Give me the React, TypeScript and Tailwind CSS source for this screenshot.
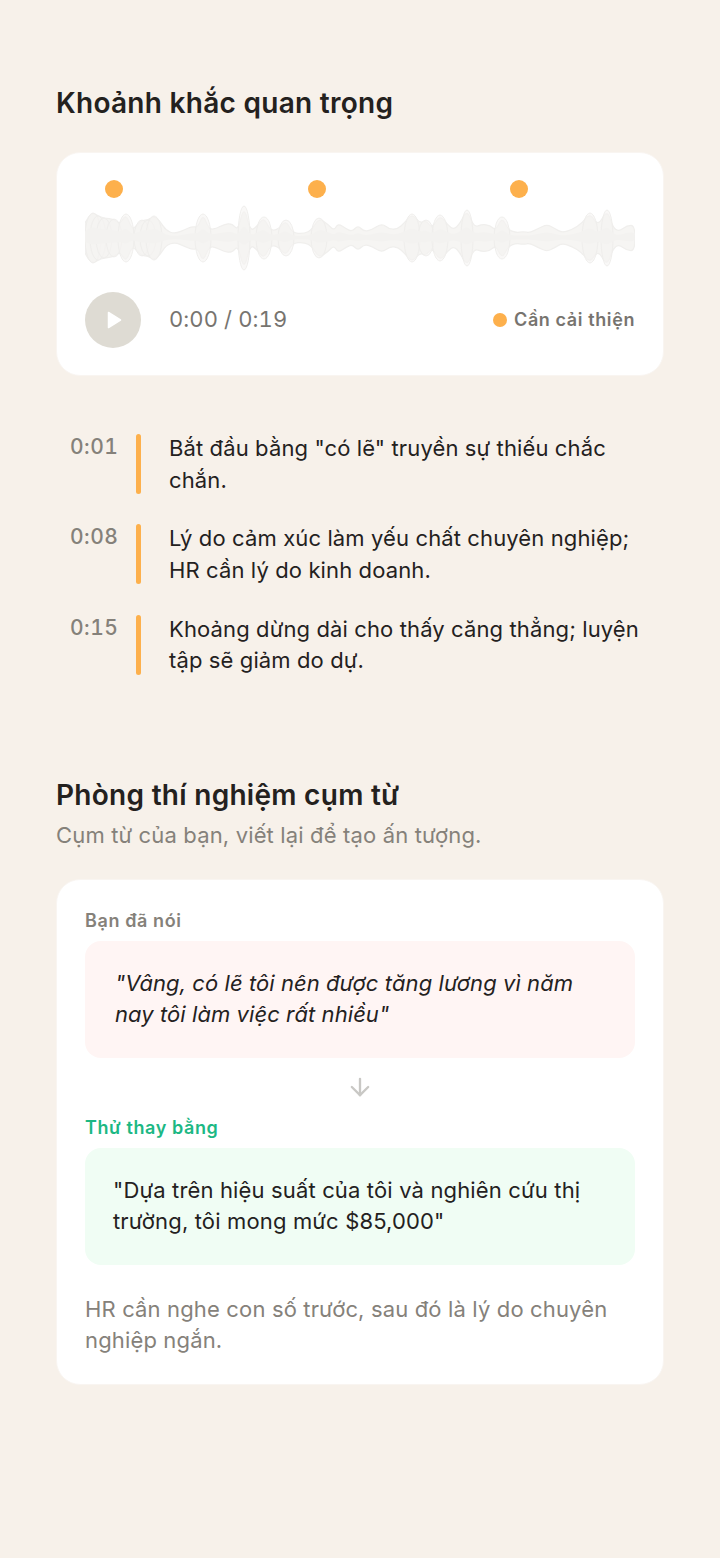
import { ArrowDown } from "lucide-react";

// [x, half height] of the waveform envelope, in picture coordinates
const PEAKS: [number, number][] = [
  [85, 14], [88, 20], [93, 24], [98, 21], [104, 19], [114, 18], [120, 13], [126, 23], [132, 8], [137, 12], [142, 17],
  [148, 17], [154, 21], [160, 16], [166, 7], [175, 4], [185, 8], [192, 11], [198, 10], [203, 23], [209, 8], [216, 9],
  [224, 13], [232, 14], [238, 7], [244, 31], [250, 7], [256, 10], [264, 20], [270, 7], [278, 8], [286, 17], [292, 5],
  [304, 4], [312, 8], [319, 19], [328, 13], [334, 7], [338, 14], [346, 9], [352, 6], [358, 12], [364, 6], [372, 8],
  [382, 14], [390, 8], [398, 9], [404, 14], [412, 23], [420, 14], [426, 17], [432, 9], [440, 22], [448, 12],
  [454, 8], [460, 14], [467, 27], [474, 10], [482, 13], [490, 12], [496, 7], [502, 20], [508, 8], [516, 5], [523, 6],
  [530, 5], [538, 9], [547, 13], [555, 9], [562, 5], [572, 8], [582, 14], [590, 24], [598, 11], [607, 27], [613, 10],
  [619, 6], [627, 12], [635, 12],
];

// Tall peaks show up as separate overlapping lobes in the waveform
const LOBES = PEAKS.filter(([x, h]) => h >= 17 && x > 92 && x < 630);

// Smooth outline through the midpoints of the envelope, mirrored around the centre line
const wavePath = (scale: number, skew: number) => {
  const upper = PEAKS.map(([x, h]): [number, number] => [x - 85, 39 - h * scale]);
  const lower = [...PEAKS].reverse().map(([x, h]): [number, number] => [x - 85, 39 + h * scale * skew]);
  const points = [...upper, ...lower];
  let d = `M${points[0][0]},${points[0][1]}`;
  for (let i = 1; i < points.length - 1; i++) {
    const [x, y] = points[i];
    const [nx, ny] = points[i + 1];
    d += ` Q${x},${y} ${(x + nx) / 2},${(y + ny) / 2}`;
  }
  return `${d} L${points[points.length - 1][0]},${points[points.length - 1][1]} Z`;
};

const MOMENTS = [
  { time: "0:01", text: 'Bắt đầu bằng "có lẽ" truyền sự thiếu chắc chắn.' },
  { time: "0:08", text: "Lý do cảm xúc làm yếu chất chuyên nghiệp; HR cần lý do kinh doanh." },
  { time: "0:15", text: "Khoảng dừng dài cho thấy căng thẳng; luyện tập sẽ giảm do dự." },
];

export default function App() {
  return (
    <div className="min-h-[1558px] bg-[#f7f1ea] px-14 pt-[84px] font-['Inter',sans-serif] text-[#24211e] [font-optical-sizing:none]">
      {/* Key moments */}
      <h2 className="text-[28px] leading-[38px] font-semibold tracking-[0.28px]">Khoảnh khắc quan trọng</h2>

      <div className="mt-[30px] h-[224px] rounded-3xl border border-[#f9f5f1] bg-white px-7 pt-[27px]">
        <div className="flex justify-between pr-[107px] pl-5">
          <span className="size-[18px] rounded-full bg-[#fdb04c]" />
          <span className="size-[18px] rounded-full bg-[#fdb04c]" />
          <span className="size-[18px] rounded-full bg-[#fdb04c]" />
        </div>

        <svg className="mt-px block h-[80px] w-[550px] blur-[0.6px]" viewBox="0 0 550 80" fill="none">
          <path d={wavePath(1.05, 1)} fill="#f6f5f3" stroke="#f0efed" strokeWidth="1.25" strokeLinejoin="round" />
          {LOBES.map(([x, h]) => (
            <ellipse
              key={x}
              cx={x - 85}
              cy={39}
              rx={h > 25 ? 6 : 8}
              ry={h + 1}
              fill="#f5f4f2"
              fillOpacity={0.6}
              stroke="#efeeec"
              strokeWidth="1"
            />
          ))}
          <path d={wavePath(0.45, 0.6)} fill="#f3f2f0" />
        </svg>

        <div className="mt-[13px] flex items-center">
          <div className="flex size-14 items-center justify-center rounded-full bg-[#dedbd3]">
            <svg className="ml-0.5 h-[18px] w-[15px]" viewBox="0 0 15 18" fill="white">
              <path d="M1.5 1.5 L13.5 9 L1.5 16.5 Z" stroke="white" strokeWidth="1.5" strokeLinejoin="round" />
            </svg>
          </div>
          <span className="ml-7 -translate-y-px text-[22px] tracking-[0.1px] text-[#77746f] tabular-nums">
            0:00 / 0:19
          </span>
          <div className="ml-auto flex items-center gap-[7px]">
            <span className="size-[14px] rounded-full bg-[#fdb04c]" />
            <span className="text-lg font-semibold tracking-[0.6px] text-[#77746f]">Cần cải thiện</span>
          </div>
        </div>
      </div>

      <div className="mt-[58px] flex flex-col gap-[30.4px]">
        {MOMENTS.map((moment) => (
          <div key={moment.time} className="flex h-[60px]">
            <span className="w-20 pt-px pl-3.5 text-[21px] leading-6 font-medium tracking-[0.5px] text-[#85817a] tabular-nums">
              {moment.time}
            </span>
            <span className="h-[60px] w-[5px] rounded-full bg-[#fdb04c]" />
            <p className="-mt-px ml-7 w-[474px] text-[22px] leading-[31.5px] tracking-[0.12px] text-[#24211e]">
              {moment.text}
            </p>
          </div>
        ))}
      </div>

      {/* Phrase lab */}
      <h2 className="mt-[101px] text-[28px] leading-[38px] font-semibold tracking-[0.28px]">Phòng thí nghiệm cụm từ</h2>
      <p className="mt-[7px] text-[22px] leading-7 tracking-[0.15px] text-[#85817a]">
        Cụm từ của bạn, viết lại để tạo ấn tượng.
      </p>

      <div className="mt-[30px] rounded-3xl border border-[#f9f5f1] bg-white px-7 pt-[29px] pb-7">
        <p className="text-lg leading-6 font-semibold tracking-[0.6px] text-[#85817a]">Bạn đã nói</p>
        <div className="mt-2 rounded-2xl bg-[#fff5f4] px-[30px] pt-[27px] pb-[27px] text-[22px] leading-[31.5px] tracking-[0.07px] italic">
          "Vâng, có lẽ tôi nên được tăng lương vì năm nay tôi làm việc rất nhiều"
        </div>
        <div className="flex justify-center py-[15px]">
          <ArrowDown className="size-7 text-[#c9c8c5]" strokeWidth={2} />
        </div>
        <p className="text-lg leading-6 font-semibold tracking-[0.6px] text-[#1cb884]">Thử thay bằng</p>
        <div className="mt-2 rounded-2xl bg-[#f0fdf4] px-7 pt-[27px] pb-[27px] text-[22px] leading-[31.5px] tracking-[0.15px]">
          "Dựa trên hiệu suất của tôi và nghiên cứu thị trường, tôi mong mức $85,000"
        </div>
        <p className="mt-[29px] text-[22px] leading-[31px] tracking-[0.15px] text-[#85817a]">
          HR cần nghe con số trước, sau đó là lý do chuyên nghiệp ngắn.
        </p>
      </div>
    </div>
  );
}
